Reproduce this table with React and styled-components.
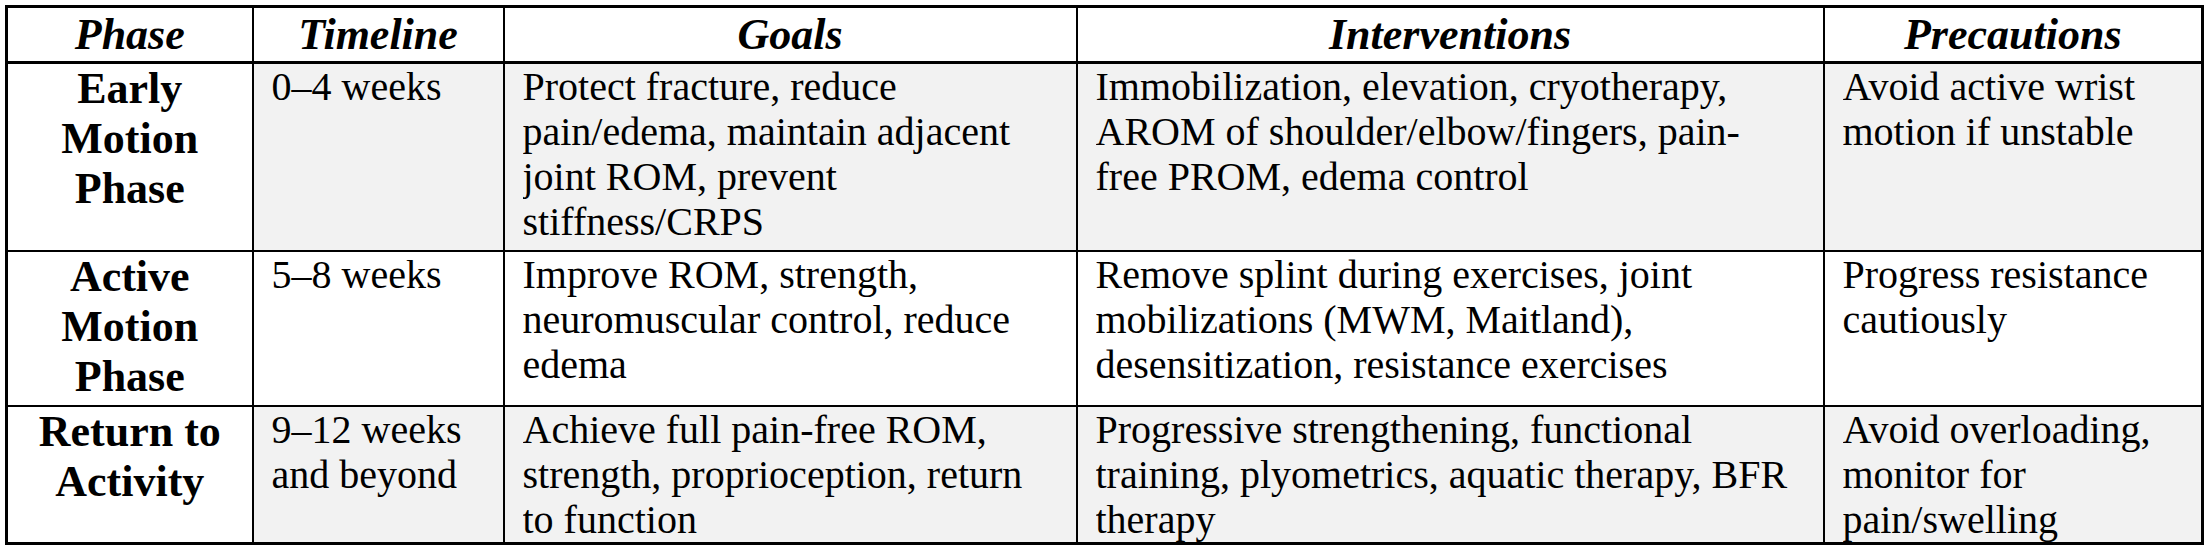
import styled, { createGlobalStyle } from "styled-components";

const serif = `"Liberation Serif", "Times New Roman", serif`;

const GlobalStyle = createGlobalStyle`
  html, body {
    margin: 0;
    padding: 0;
    background: #ffffff;
  }
  body, table, th, td {
    font-family: ${serif};
    color: #000000;
  }
`;

const columns = [
  { key: "phase", label: "Phase", width: 246 },
  { key: "timeline", label: "Timeline", width: 251 },
  { key: "goals", label: "Goals", width: 573 },
  { key: "interventions", label: "Interventions", width: 747 },
  { key: "precautions", label: "Precautions", width: 379 },
];

const rows = [
  {
    height: 186,
    shaded: true,
    phase: ["Early", "Motion", "Phase"],
    timeline: ["0–4 weeks"],
    goals: [
      "Protect fracture, reduce",
      "pain/edema, maintain adjacent",
      "joint ROM, prevent",
      "stiffness/CRPS",
    ],
    interventions: [
      "Immobilization, elevation, cryotherapy,",
      "AROM of shoulder/elbow/fingers, pain-",
      "free PROM, edema control",
    ],
    precautions: ["Avoid active wrist", "motion if unstable"],
  },
  {
    height: 153,
    shaded: false,
    phase: ["Active", "Motion", "Phase"],
    timeline: ["5–8 weeks"],
    goals: [
      "Improve ROM, strength,",
      "neuromuscular control, reduce",
      "edema",
    ],
    interventions: [
      "Remove splint during exercises, joint",
      "mobilizations (MWM, Maitland),",
      "desensitization, resistance exercises",
    ],
    precautions: ["Progress resistance", "cautiously"],
  },
  {
    height: 135,
    shaded: true,
    phase: ["Return to", "Activity"],
    timeline: ["9–12 weeks", "and beyond"],
    goals: [
      "Achieve full pain-free ROM,",
      "strength, proprioception, return",
      "to function",
    ],
    interventions: [
      "Progressive strengthening, functional",
      "training, plyometrics, aquatic therapy, BFR",
      "therapy",
    ],
    precautions: ["Avoid overloading,", "monitor for", "pain/swelling"],
  },
];

function Lines({ lines }) {
  return lines.map((line, i) => (
    <span key={i}>
      {line}
      {i < lines.length - 1 && <br />}
    </span>
  ));
}

export default function App() {
  return (
    <>
      <GlobalStyle />
      <Page>
        <Table>
          <colgroup>
            {columns.map((c) => (
              <Col key={c.key} $w={c.width} />
            ))}
          </colgroup>
          <thead>
            <tr>
              {columns.map((c) => (
                <HeadCell key={c.key}>{c.label}</HeadCell>
              ))}
            </tr>
          </thead>
          <tbody>
            {rows.map((row, r) => (
              <tr key={r}>
                <PhaseCell>
                  <CellBody $h={row.height}>
                    <Lines lines={row.phase} />
                  </CellBody>
                </PhaseCell>
                {columns.slice(1).map((c) => (
                  <BodyCell key={c.key} $shaded={row.shaded}>
                    <CellBody $h={row.height}>
                      <Lines lines={row[c.key]} />
                    </CellBody>
                  </BodyCell>
                ))}
              </tr>
            ))}
          </tbody>
        </Table>
      </Page>
    </>
  );
}

const Page = styled.div`
  padding: 5px 0 0 5px;
  width: 2212px;
  height: 550px;
  box-sizing: border-box;
  background: #ffffff;
  font-family: ${serif};
`;

const Table = styled.table`
  border-collapse: collapse;
  table-layout: fixed;
  width: 2198px;
  border: 3px solid #000;
  font-family: ${serif};
`;

const Col = styled.col`
  width: ${(p) => p.$w}px;
`;

const HeadCell = styled.th`
  height: 53px;
  padding: 0 12px;
  border: 2px solid #000;
  border-bottom: 3px solid #000;
  font-family: ${serif};
  font-size: 44px;
  line-height: 50px;
  font-weight: 700;
  font-style: italic;
  text-align: center;
  vertical-align: middle;
  background: #ffffff;
`;

const BodyCell = styled.td`
  padding: 0 14px 0 18px;
  border: 2px solid #000;
  vertical-align: top;
  font-family: ${serif};
  font-size: 40px;
  line-height: 45px;
  text-align: left;
  background: ${(p) => (p.$shaded ? "#f2f2f2" : "#ffffff")};
`;

const PhaseCell = styled.td`
  padding: 0 8px;
  border: 2px solid #000;
  vertical-align: top;
  font-family: ${serif};
  font-size: 44px;
  line-height: 50px;
  font-weight: 700;
  text-align: center;
  background: #ffffff;
`;

const CellBody = styled.div`
  height: ${(p) => p.$h}px;
  overflow: hidden;
  white-space: nowrap;
`;
